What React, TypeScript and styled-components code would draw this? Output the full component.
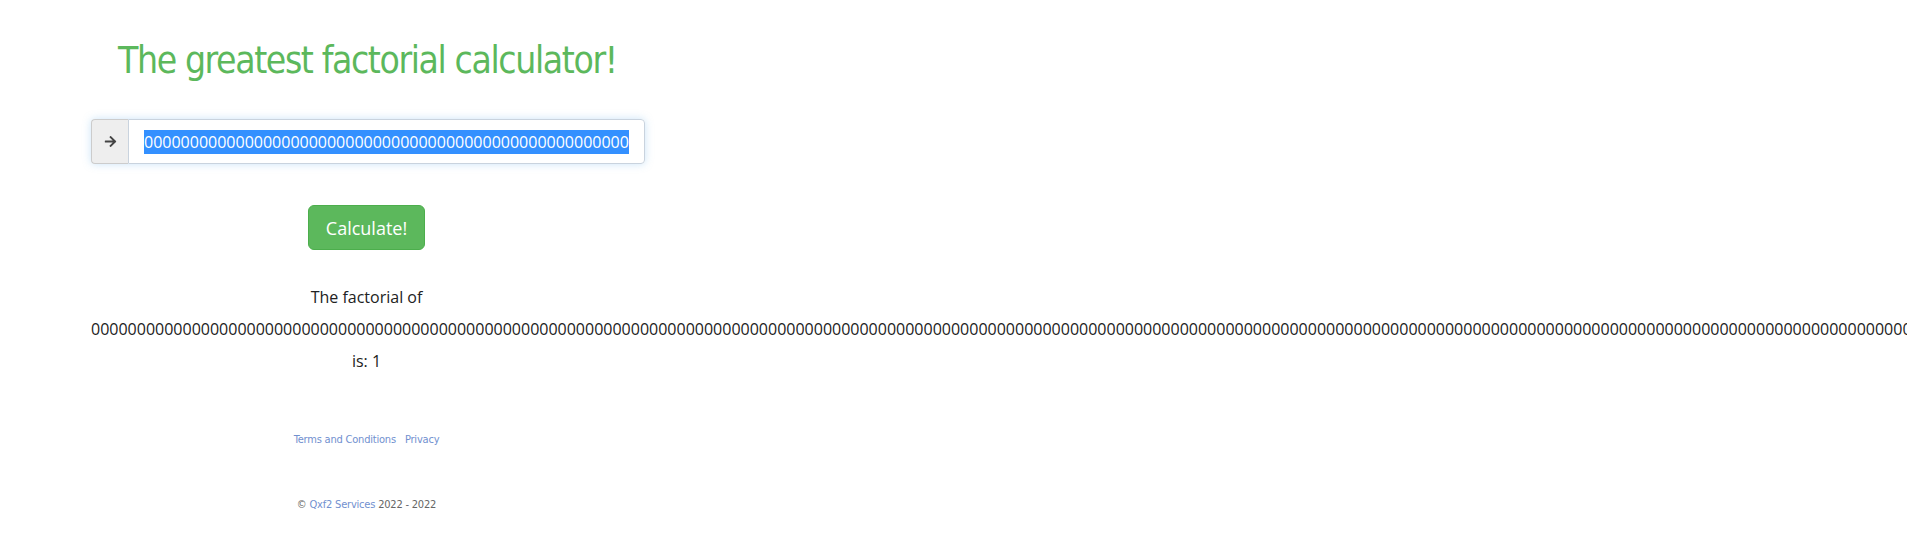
import React from "react";
import styled, { createGlobalStyle } from "styled-components";
import { FaArrowRight } from "react-icons/fa";

const GlobalStyle = createGlobalStyle`
  html, body {
    margin: 0;
    padding: 0;
    overflow: hidden;
    background: #ffffff;
  }
  body {
    font-family: "Open Sans", "Liberation Sans", sans-serif;
    font-size: 16px;
    color: #333333;
  }
`;

const Page = styled.div`
  width: 551px;
  padding-left: 91px;
  display: flex;
  flex-direction: column;
`;

const Title = styled.h1`
  margin: 39px 0 0 0;
  padding-left: 27px;
  font-family: "DejaVu Sans Condensed", "Liberation Sans", sans-serif;
  font-weight: 400;
  font-size: 37px;
  letter-spacing: -1.4px;
  line-height: 44px;
  color: #5cb85c;
  white-space: nowrap;
`;

const InputGroup = styled.div`
  margin-top: 36px;
  display: flex;
  width: 554px;
  height: 45px;
  border-radius: 4px;
  box-shadow: 0 0 8px rgba(102, 175, 233, 0.35);
`;

const Addon = styled.span`
  box-sizing: border-box;
  width: 37px;
  flex-shrink: 0;
  display: flex;
  align-items: center;
  justify-content: center;
  background: #eeeeee;
  border: 1px solid #cccccc;
  border-right: none;
  border-radius: 4px 0 0 4px;
  color: #444444;
`;

const Field = styled.div`
  box-sizing: border-box;
  flex: 1;
  display: flex;
  align-items: center;
  padding: 0 15px;
  background: #ffffff;
  border: 1px solid #c9d3de;
  border-radius: 0 4px 4px 0;
`;

const Selected = styled.span`
  background: #3390ff;
  color: #ffffff;
  font-size: 16px;
  line-height: 24px;
  white-space: nowrap;
`;

const ButtonRow = styled.div`
  margin-top: 41px;
  display: flex;
  justify-content: center;
`;

const CalcButton = styled.button`
  box-sizing: border-box;
  height: 45px;
  padding: 0 17px;
  font-family: "Open Sans", "Liberation Sans", sans-serif;
  font-size: 18px;
  color: #ffffff;
  background: #5cb85c;
  border: 1px solid #4cae4c;
  border-radius: 6px;
  cursor: pointer;
`;

const Result = styled.div`
  margin-top: 31px;
  text-align: center;
  line-height: 32px;
  color: #222222;
`;

const ResultLine = styled.div`
  white-space: nowrap;
`;

const Footer = styled.div`
  margin-top: 54px;
  display: flex;
  flex-direction: column;
  align-items: center;
  font-family: "DejaVu Sans Condensed", "Liberation Sans", sans-serif;
  font-size: 11px;
  letter-spacing: -0.2px;
  line-height: 17px;
  color: #666666;
`;

const Links = styled.div`
  display: flex;
  gap: 9px;
`;

const Copyright = styled.div`
  margin-top: 48px;
`;

const Link = styled.a`
  color: #7190cf;
  text-decoration: none;
`;

export default function App() {
  const longNumber = "0".repeat(240);
  return (
    <>
      <GlobalStyle />
      <Page>
        <Title>The greatest factorial calculator!</Title>
        <InputGroup>
          <Addon>
            <FaArrowRight size={13} />
          </Addon>
          <Field>
            <Selected>{"0".repeat(53)}</Selected>
          </Field>
        </InputGroup>
        <ButtonRow>
          <CalcButton>Calculate!</CalcButton>
        </ButtonRow>
        <Result>
          <ResultLine>The factorial of</ResultLine>
          <ResultLine>{longNumber}</ResultLine>
          <ResultLine>is: 1</ResultLine>
        </Result>
        <Footer>
          <Links>
            <Link href="#">Terms and Conditions</Link>
            <Link href="#">Privacy</Link>
          </Links>
          <Copyright>
            © <Link href="#">Qxf2 Services</Link> 2022 - 2022
          </Copyright>
        </Footer>
      </Page>
    </>
  );
}
